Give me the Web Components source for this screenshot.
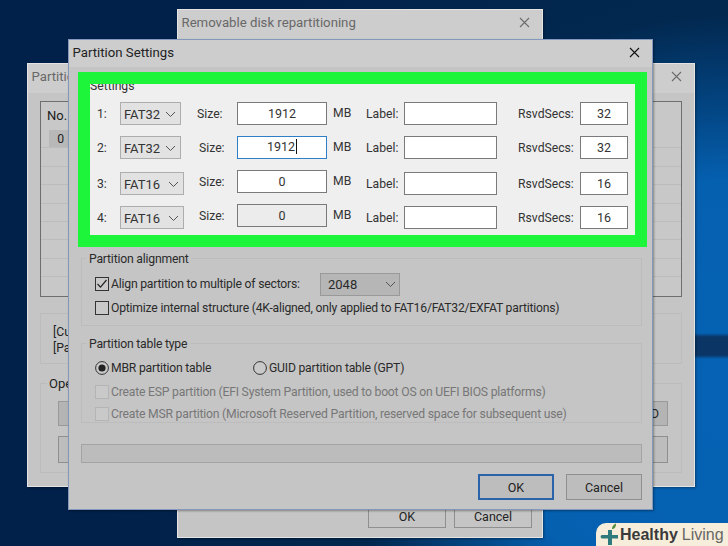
<!DOCTYPE html>
<html>
<head>
<meta charset="utf-8">
<style>
  html, body { margin: 0; padding: 0; background: #02234a; }
  body { font: 12.2px Roboto, "Liberation Sans", sans-serif; color: #222; }
</style>
</head>
<body>
<desk-top>
  <win-dow x="27" y="63" w="668" h="424" heading="Partition Information" dim edge="#e4e4e4">
    <back-content></back-content>
  </win-dow>
  <win-dow x="177" y="9" w="366" h="529" heading="Removable disk repartitioning" dim edge="#e4e4e4">
    <top-content></top-content>
  </win-dow>
  <win-dow x="68" y="39" w="585" h="471" heading="Partition Settings" edge="#8498bd">
    <settings-content></settings-content>
  </win-dow>
  <brand-badge></brand-badge>
</desk-top>

<script>
const CHEVRON = `<svg width="11" height="7" viewBox="0 0 11 7"><path d="M1 1l4.5 4.5L10 1" fill="none" stroke="currentColor" stroke-width="1"/></svg>`;

class DeskTop extends HTMLElement {
  constructor() {
    super();
    this.attachShadow({ mode: "open" }).innerHTML = `<style>
      :host {
        display: block; position: relative; width: 728px; height: 546px; overflow: hidden;
        background:
          linear-gradient(180deg, transparent 333px, #0a3565 337px, #0a3565 355px, transparent 359px) right top / 33px 100% no-repeat,
          radial-gradient(circle 620px at 728px 400px, #0562b4 0, #0560b0 220px, #034684 290px, #02284f 385px, #01204a 620px);
      }
    </style><slot></slot>`;
  }
}

class WinDow extends HTMLElement {
  constructor() {
    super();
    this.attachShadow({ mode: "open" });
  }
  connectedCallback() {
    const a = (n) => this.getAttribute(n);
    const dim = this.hasAttribute("dim");
    this.shadowRoot.innerHTML = `<style>
      :host {
        position: absolute; left: ${a("x")}px; top: ${a("y")}px; width: ${a("w")}px; height: ${a("h")}px;
        display: flex; flex-direction: column; box-sizing: border-box;
        background: #c5c5c5; border: 1px solid ${a("edge")};
        box-shadow: 1px 1px 2px rgba(0,0,0,.35);
      }
      .bar {
        flex: none; box-sizing: border-box; height: ${dim ? 29 : 27}px; background: #cdcdcd; display: flex; align-items: center;
        justify-content: space-between; padding: 0 12px ${dim ? 4 : 2}px 3.5px; overflow: hidden;
        font-size: 13.2px; color: ${dim ? "#686868" : "#222"}; white-space: nowrap;
      }
      svg { flex: none; }
      .body { flex: 1; min-height: 0; }
    </style>
    <div class="bar"><span>${a("heading")}</span>
      <svg width="11" height="11" viewBox="0 0 11 11"><path d="M1 1l9 9M10 1l-9 9" stroke="${dim ? "#6c6c6c" : "#111"}" stroke-width="1.1" fill="none"/></svg>
    </div>
    <div class="body"><slot></slot></div>`;
  }
}

class FieldBox extends HTMLElement {
  constructor() {
    super();
    this.attachShadow({ mode: "open" });
  }
  connectedCallback() {
    const v = this.getAttribute("value") || "";
    const off = this.hasAttribute("off");
    const focus = this.hasAttribute("focus");
    this.shadowRoot.innerHTML = `<style>
      :host {
        display: flex; align-items: center; justify-content: center; box-sizing: border-box; height: 23px;
        background: ${off ? "#ececec" : "#fff"}; border: 1px solid ${focus ? "#2f7fc8" : "#7a7a7a"};
        color: #333; font-size: 12.5px; ${focus ? "padding-bottom: 3px;" : ""}
      }
      i { display: inline-block; width: 1px; height: 15px; background: #111; margin-left: 1px; }
    </style><span>${v}</span>${focus ? "<i></i>" : ""}`;
  }
}

class ComboBox extends HTMLElement {
  constructor() {
    super();
    this.attachShadow({ mode: "open" });
  }
  connectedCallback() {
    const dark = this.hasAttribute("dark");
    this.shadowRoot.innerHTML = `<style>
      :host {
        display: flex; align-items: center; justify-content: space-between; box-sizing: border-box; height: 23px;
        width: ${this.getAttribute("w")}px; padding: 1px 4px 0 3px; flex: none;
        background: ${dark ? "#b6b6b6" : "#e2e2e2"}; border: 1px solid ${dark ? "#999" : "#adadad"};
        color: #333; font-size: 13px;
      }
      :host([dark]) { padding-left: 7px; padding-right: 3px; color: #2a2a2a; }
      svg { color: #555; }
    </style><span>${this.getAttribute("value")}</span>${CHEVRON}`;
  }
}

class SizeRow extends HTMLElement {
  constructor() {
    super();
    this.attachShadow({ mode: "open" });
  }
  connectedCallback() {
    const a = (n) => this.getAttribute(n);
    const n = Number(a("n"));
    const shift = n === 1 ? 0 : 2;
    // the lower two rows have their right hand controls sitting 2px further down
    const low = n > 2 ? "low" : "";
    this.shadowRoot.innerHTML = `<style>
      :host {
        display: grid; align-items: center; height: 23px; color: #333; white-space: nowrap;
        grid-template-columns: 30px 77px 40px 90px 39px 38px 93px 83px 48px;
        grid-template-rows: 23px;
        font-size: 12.2px;
      }
      .sz { margin-left: ${shift}px; }
      .mb { margin-left: 6px; margin-bottom: 2px; }
      .num { margin-left: 7px; }
      .rs { margin-left: 21px; }
      .low { margin-top: 4px; }
    </style>
    <span class="num ${low}">${a("n")}:</span>
    <combo-box class="${low}" w="${a("fs") === "FAT32" ? 61 : 64}" value="${a("fs")}"></combo-box>
    <span class="sz">Size:</span>
    <field-box value="${a("size")}" ${a("state") || ""}></field-box>
    <span class="mb">MB</span>
    <span class="${low}">Label:</span>
    <field-box class="${low}"></field-box>
    <span class="rs ${low}">RsvdSecs:</span>
    <field-box class="${low}" value="${a("rsvd")}"></field-box>`;
  }
}

class GroupBox extends HTMLElement {
  constructor() {
    super();
    this.attachShadow({ mode: "open" });
  }
  connectedCallback() {
    this.shadowRoot.innerHTML = `<style>
      :host { display: block; box-sizing: border-box; border: 1px solid #bcbcbc; }
      .legend {
        display: table; margin: -8px 0 0 -9px; padding: 0 3px; background: #c5c5c5;
        color: #2b2b2b; height: 17px; line-height: 17px; font-size: 12.2px; letter-spacing: -.2px;
      }
    </style><div class="legend">${this.getAttribute("legend")}</div><slot></slot>`;
  }
}

class TickItem extends HTMLElement {
  constructor() {
    super();
    this.attachShadow({ mode: "open" });
  }
  connectedCallback() {
    const kind = this.getAttribute("kind");
    const on = this.hasAttribute("on");
    const off = this.hasAttribute("off");
    let mark = "";
    if (kind === "radio") {
      mark = `<svg width="14" height="14" viewBox="0 0 14 14"><circle cx="7" cy="7" r="6.4" fill="#c9c9c9" stroke="#333" stroke-width="1"/>${on ? '<circle cx="7" cy="7" r="3.6" fill="#222"/>' : ""}</svg>`;
    } else {
      mark = `<svg width="14" height="14" viewBox="0 0 14 14"><rect x=".5" y=".5" width="13" height="13" fill="#c9c9c9" stroke="${off ? "#b4b4b4" : "#333"}"/>${on ? '<path d="M2.5 7l3 3.2L11.5 3" fill="none" stroke="#222" stroke-width="1.2"/>' : ""}</svg>`;
    }
    this.shadowRoot.innerHTML = `<style>
      :host { display: flex; align-items: center; gap: 2px; height: 14px; white-space: nowrap; color: ${off ? "#777" : "#2b2b2b"}; font-size: 12.2px; letter-spacing: -.21px; }
      svg { flex: none; }
    </style>${mark}<slot></slot>`;
  }
}

class PushButton extends HTMLElement {
  constructor() {
    super();
    this.attachShadow({ mode: "open" }).innerHTML = `<style>
      :host {
        display: flex; align-items: center; justify-content: center; box-sizing: border-box;
        width: 76px; height: 26px; background: #bdbdbd; border: 1px solid #8f8f8f; color: #222; font-size: 12.5px;
      }
      :host([primary]) { border: 2px solid #2a63a8; }
    </style><slot></slot>`;
  }
}

class SettingsContent extends HTMLElement {
  constructor() {
    super();
    this.attachShadow({ mode: "open" }).innerHTML = `<style>
      :host { display: flex; flex-direction: column; height: 100%; box-sizing: border-box; padding: 5px 10px 0 9px; }
      .green { flex: none; border: 12px solid #1cf53a; background: #efefef; height: 175px; box-sizing: border-box; margin-right: -5px; overflow: hidden; }
      .cap { height: 18px; overflow: hidden; color: #333; }
      .cap span { display: block; margin-top: -5px; }
      .rows { display: flex; flex-direction: column; gap: 11px; }
      .g1 { margin: 11px 0 0 3px; height: 68px; padding: 0 0 0 13px; }
      .g1 .line { display: flex; align-items: center; height: 22px; margin: 5px 0 6px; }
      .g1 .line tick-item { width: 225px; }
      .g2 { margin: 17px 0 0 3px; height: 80px; padding: 0 0 0 13px; }
      .radios { display: flex; margin: 8px 0 10px; }
      .radios tick-item:first-child { width: 158px; }
      .dis { display: flex; flex-direction: column; gap: 8px; }
      .bar { margin: 21px 0 0 3px; height: 19px; background: #bcbcbc; border: 1px solid #a4a4a4; box-sizing: border-box; }
      .foot { display: flex; justify-content: flex-end; gap: 12px; margin-top: 11px; }
    </style>
    <div class="green">
      <div class="cap"><span>Settings</span></div>
      <div class="rows">
        <size-row n="1" fs="FAT32" size="1912" rsvd="32"></size-row>
        <size-row n="2" fs="FAT32" size="1912" rsvd="32" state="focus"></size-row>
        <size-row n="3" fs="FAT16" size="0" rsvd="16"></size-row>
        <size-row n="4" fs="FAT16" size="0" rsvd="16" state="off"></size-row>
      </div>
    </div>
    <group-box class="g1" legend="Partition alignment">
      <div class="line"><tick-item kind="check" on>Align partition to multiple of sectors:</tick-item><combo-box dark w="80" value="2048"></combo-box></div>
      <tick-item kind="check">Optimize internal structure (4K-aligned, only applied to FAT16/FAT32/EXFAT partitions)</tick-item>
    </group-box>
    <group-box class="g2" legend="Partition table type">
      <div class="radios">
        <tick-item kind="radio" on>MBR partition table</tick-item>
        <tick-item kind="radio">GUID partition table (GPT)</tick-item>
      </div>
      <div class="dis">
        <tick-item kind="check" off>Create ESP partition (EFI System Partition, used to boot OS on UEFI BIOS platforms)</tick-item>
        <tick-item kind="check" off>Create MSR partition (Microsoft Reserved Partition, reserved space for subsequent use)</tick-item>
      </div>
    </group-box>
    <div class="bar"></div>
    <div class="foot"><push-button primary>OK</push-button><push-button>Cancel</push-button></div>`;
  }
}

class TopContent extends HTMLElement {
  constructor() {
    super();
    this.attachShadow({ mode: "open" }).innerHTML = `<style>
      :host { display: flex; flex-direction: column; justify-content: flex-end; height: 100%; box-sizing: border-box; padding: 0 10px 9px 0; }
      .foot { display: flex; justify-content: flex-end; gap: 8px; }
      push-button { width: 78px; height: 24px; background: #c5c5c5; }
    </style>
    <div class="foot"><push-button>OK</push-button><push-button>Cancel</push-button></div>`;
  }
}

class BackContent extends HTMLElement {
  constructor() {
    super();
    this.attachShadow({ mode: "open" }).innerHTML = `<style>
      :host { display: flex; flex-direction: column; height: 100%; box-sizing: border-box; padding: 8px 12px 13px 12px; color: #222; font-size: 12.2px; }
      .list { flex: none; height: 196px; box-sizing: border-box; border: 1px solid #6e6e6e; background: #c8c8c8; display: flex; flex-direction: column; }
      .list div { height: 18.4px; border-bottom: 1px solid #bcbcbc; padding-left: 8px; box-sizing: border-box; line-height: 18px; }
      .list .head { height: 28px; border: 0; padding-left: 6px; line-height: 27px; font-size: 13px; color: #1c1c1c; }
      .list .first b { display: block; width: 20px; background: #b8b8b8; font-weight: 400; height: 17px; text-align: right; padding-right: 5px; box-sizing: border-box; }
      .info { flex: none; margin-top: 16px; height: 51px; border: 1px solid #bcbcbc; box-sizing: border-box; padding: 10px 0 0 12px; line-height: 16px; }
      .open { flex: 1; margin-top: 19px; border: 1px solid #bcbcbc; box-sizing: border-box; padding: 0 13px 0 17px; display: flex; flex-direction: column; gap: 10px; }
      .open > span { align-self: flex-start; margin: -9px 0 -1px -11px; height: 17px; line-height: 17px; background: #c5c5c5; padding: 0 2px; font-size: 13px; }
      .btn { height: 25px; box-sizing: border-box; border: 1px solid #8f8f8f; background: #bdbdbd; display: flex; justify-content: flex-end; align-items: center; padding-right: 8px; flex: none; }
      .btn.lo { height: 27px; }
      .btn.hi { background: #b4b4b4; border-color: #999; }
    </style>
    <div class="list">
      <div class="head">No.</div>
      <div class="first"><b>0</b></div>
      <div></div><div></div><div></div><div></div><div></div><div></div><div></div>
    </div>
    <div class="info">[Current disk]<br>[Partition table]</div>
    <div class="open"><span>Operation</span>
      <div class="btn hi">D</div>
      <div class="btn lo"></div>
    </div>`;
  }
}

class BrandBadge extends HTMLElement {
  constructor() {
    super();
    this.attachShadow({ mode: "open" }).innerHTML = `<style>
      :host {
        position: absolute; right: 0; bottom: 0; width: 132px; height: 23px; box-sizing: border-box;
        background: #f6eeda; border-top-left-radius: 10px; display: flex; align-items: center; padding-left: 2px;
        font: 16px "Liberation Sans", sans-serif; white-space: nowrap; color: #666;
      }
      b { color: #3a3a3a; font-weight: 700; margin-right: 4px; }
      svg { flex: none; }
    </style>
    <svg width="22" height="23" viewBox="0 0 22 23">
      <path d="M10 7h4v5h6v3.500h-6V22h-4v-6.500H4a1.800 1.800 0 0 1 0-3.500h6z" fill="#2f7a7c"/>
      <path d="M14 6c0-3 2-4.500 4-5.500 0 3-1 5.500-4 5.500z" fill="#4c8c3a"/>
    </svg>
    <b>Healthy</b>Living`;
  }
}

customElements.define("desk-top", DeskTop);
customElements.define("win-dow", WinDow);
customElements.define("field-box", FieldBox);
customElements.define("combo-box", ComboBox);
customElements.define("size-row", SizeRow);
customElements.define("group-box", GroupBox);
customElements.define("tick-item", TickItem);
customElements.define("push-button", PushButton);
customElements.define("settings-content", SettingsContent);
customElements.define("top-content", TopContent);
customElements.define("back-content", BackContent);
customElements.define("brand-badge", BrandBadge);
</script>
</body>
</html>
